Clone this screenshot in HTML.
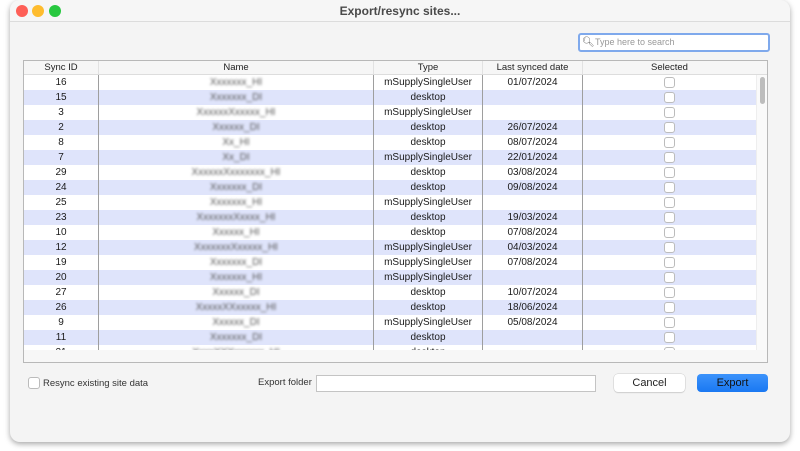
<!DOCTYPE html>
<html><head><meta charset="utf-8"><style>
*{margin:0;padding:0;box-sizing:border-box}
body{width:800px;height:451px;background:#fff;font-family:"Liberation Sans",sans-serif;position:relative;overflow:hidden}
.win{position:absolute;left:10px;top:0;width:780px;height:442px;background:#f4f4f4;border-radius:10px;box-shadow:0 2px 6px rgba(0,0,0,.35);overflow:hidden}
.tb{position:absolute;left:0;top:0;width:780px;height:22px;background:#f6f6f6;border-bottom:1px solid #dcdcdc;text-align:center;font-size:12px;font-weight:bold;color:#4a4a4a;line-height:22px}
.dot{position:absolute;top:5px;width:12px;height:12px;border-radius:50%}
.search{position:absolute;left:578px;top:33px;width:192px;height:19px;background:#fff;border:2px solid #7fa9ec;border-radius:3px;font-size:9px;color:#999;line-height:15px;padding-left:15px}
.tbl{position:absolute;left:23px;top:60px;width:745px;height:303px;border:1px solid #b8b8b8;background:#f7f7f7;overflow:hidden}
.hdr{position:absolute;left:0;top:0;width:743px;height:14px;background:#f6f6f6;border-bottom:1px solid #ddd;font-size:9.5px;color:#222;display:flex}
.hdr div{text-align:center;line-height:14px;border-right:1px solid #e2e2e2}
.rows{position:absolute;left:0;top:14px;width:732px;height:275px;overflow:hidden;background:#fff}
.r{display:flex;height:15px;font-size:10px;color:#1a1a1a;line-height:15px}
.r:nth-child(even){background:#dfe4fb}
.r div{text-align:center;border-right:1px solid #9e9e9e;height:15px}
.c1{width:75px}.c2{width:275px}.c3{width:109px}.c4{width:100px}.c5{width:173px;border-right:none!important}
.nm{filter:blur(1.4px);color:#555}
.cb{display:inline-block;width:11px;height:11px;border:1px solid #bcbcbc;border-radius:3px;background:#fff;margin-top:2px}
.sb{position:absolute;left:732px;top:14px;width:11px;height:275px;background:#fafafa;border-left:1px solid #eee}
.thumb{position:absolute;left:3px;top:2px;width:5px;height:27px;border-radius:3px;background:#bdbdbd}
</style></head><body>
<div class="win">
<div class="tb">Export/resync sites...
<div class="dot" style="left:6px;background:#fe5f57"></div><div class="dot" style="left:22px;background:#febc2e"></div><div class="dot" style="left:39px;background:#28c840"></div></div>
</div>
<div class="search"><span style="position:absolute;left:2px;top:0;color:#666;font-size:10px">&#128269;&#xFE0E;</span>Type here to search</div>
<div class="tbl">
<div class="hdr"><div class="c1">Sync ID</div><div class="c2">Name</div><div class="c3">Type</div><div class="c4">Last synced date</div><div class="c5">Selected</div><div style="width:11px;border:none"></div></div>
<div class="rows">
<div class="r"><div class="c1">16</div><div class="c2"><span class="nm">Xxxxxxx_HI</span></div><div class="c3">mSupplySingleUser</div><div class="c4">01/07/2024</div><div class="c5"><span class="cb"></span></div></div>
<div class="r"><div class="c1">15</div><div class="c2"><span class="nm">Xxxxxxx_DI</span></div><div class="c3">desktop</div><div class="c4"></div><div class="c5"><span class="cb"></span></div></div>
<div class="r"><div class="c1">3</div><div class="c2"><span class="nm">XxxxxxXxxxxx_HI</span></div><div class="c3">mSupplySingleUser</div><div class="c4"></div><div class="c5"><span class="cb"></span></div></div>
<div class="r"><div class="c1">2</div><div class="c2"><span class="nm">Xxxxxx_DI</span></div><div class="c3">desktop</div><div class="c4">26/07/2024</div><div class="c5"><span class="cb"></span></div></div>
<div class="r"><div class="c1">8</div><div class="c2"><span class="nm">Xx_HI</span></div><div class="c3">desktop</div><div class="c4">08/07/2024</div><div class="c5"><span class="cb"></span></div></div>
<div class="r"><div class="c1">7</div><div class="c2"><span class="nm">Xx_DI</span></div><div class="c3">mSupplySingleUser</div><div class="c4">22/01/2024</div><div class="c5"><span class="cb"></span></div></div>
<div class="r"><div class="c1">29</div><div class="c2"><span class="nm">XxxxxxXxxxxxxx_HI</span></div><div class="c3">desktop</div><div class="c4">03/08/2024</div><div class="c5"><span class="cb"></span></div></div>
<div class="r"><div class="c1">24</div><div class="c2"><span class="nm">Xxxxxxx_DI</span></div><div class="c3">desktop</div><div class="c4">09/08/2024</div><div class="c5"><span class="cb"></span></div></div>
<div class="r"><div class="c1">25</div><div class="c2"><span class="nm">Xxxxxxx_HI</span></div><div class="c3">mSupplySingleUser</div><div class="c4"></div><div class="c5"><span class="cb"></span></div></div>
<div class="r"><div class="c1">23</div><div class="c2"><span class="nm">XxxxxxxXxxxx_HI</span></div><div class="c3">desktop</div><div class="c4">19/03/2024</div><div class="c5"><span class="cb"></span></div></div>
<div class="r"><div class="c1">10</div><div class="c2"><span class="nm">Xxxxxx_HI</span></div><div class="c3">desktop</div><div class="c4">07/08/2024</div><div class="c5"><span class="cb"></span></div></div>
<div class="r"><div class="c1">12</div><div class="c2"><span class="nm">XxxxxxxXxxxxx_HI</span></div><div class="c3">mSupplySingleUser</div><div class="c4">04/03/2024</div><div class="c5"><span class="cb"></span></div></div>
<div class="r"><div class="c1">19</div><div class="c2"><span class="nm">Xxxxxxx_DI</span></div><div class="c3">mSupplySingleUser</div><div class="c4">07/08/2024</div><div class="c5"><span class="cb"></span></div></div>
<div class="r"><div class="c1">20</div><div class="c2"><span class="nm">Xxxxxxx_HI</span></div><div class="c3">mSupplySingleUser</div><div class="c4"></div><div class="c5"><span class="cb"></span></div></div>
<div class="r"><div class="c1">27</div><div class="c2"><span class="nm">Xxxxxx_DI</span></div><div class="c3">desktop</div><div class="c4">10/07/2024</div><div class="c5"><span class="cb"></span></div></div>
<div class="r"><div class="c1">26</div><div class="c2"><span class="nm">XxxxxXXxxxxx_HI</span></div><div class="c3">desktop</div><div class="c4">18/06/2024</div><div class="c5"><span class="cb"></span></div></div>
<div class="r"><div class="c1">9</div><div class="c2"><span class="nm">Xxxxxx_DI</span></div><div class="c3">mSupplySingleUser</div><div class="c4">05/08/2024</div><div class="c5"><span class="cb"></span></div></div>
<div class="r"><div class="c1">11</div><div class="c2"><span class="nm">Xxxxxxx_DI</span></div><div class="c3">desktop</div><div class="c4"></div><div class="c5"><span class="cb"></span></div></div>
<div class="r"><div class="c1">21</div><div class="c2"><span class="nm">XxxxXXXxxxxxx_HI</span></div><div class="c3">desktop</div><div class="c4"></div><div class="c5"><span class="cb"></span></div></div>
</div>
<div class="sb"><div class="thumb"></div></div>
</div>
<div style="position:absolute;left:28px;top:377px;width:12px;height:12px;border:1px solid #bbb;border-radius:3px;background:#fff"></div>
<div style="position:absolute;left:43px;top:377px;font-size:9.5px;color:#333;line-height:13px">Resync existing site data</div>
<div style="position:absolute;left:258px;top:376px;font-size:9.5px;color:#333;line-height:13px">Export folder</div>
<div style="position:absolute;left:316px;top:375px;width:280px;height:17px;background:#fff;border:1px solid #c4c4c4"></div>
<div style="position:absolute;left:614px;top:374px;width:71px;height:18px;background:#fff;border-radius:4px;box-shadow:0 0 0 .5px #ccc,0 1px 1px rgba(0,0,0,.15);text-align:center;font-size:11px;line-height:18px;color:#222">Cancel</div>
<div style="position:absolute;left:697px;top:374px;width:71px;height:18px;background:linear-gradient(#3c93fb,#1a78f2);border-radius:4px;text-align:center;font-size:11px;line-height:18px;color:#111">Export</div>
</body></html>
